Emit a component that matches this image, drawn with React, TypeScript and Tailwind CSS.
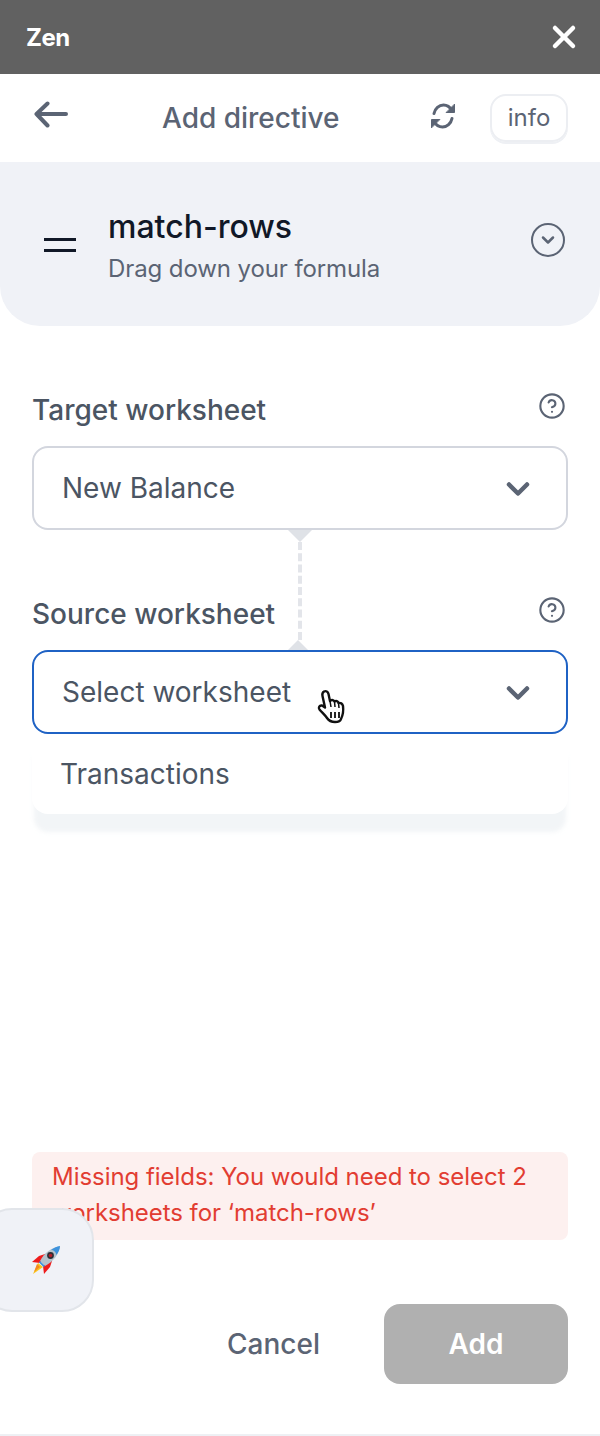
import { ChevronDown, CircleHelp, X } from "lucide-react";

// rocket emoji, drawn because no colour emoji font is installed
const Rocket = () => (
  <svg width="30" height="30" viewBox="0 0 30 30">
    <path d="M8 11 L14 9 L15 13 L9 18 L1 17 Z" fill="#ee1c1c" />
    <path d="M19 22 L21 16 L17 15 L12 21 L13 29 Z" fill="#ee1c1c" />
    <path d="M7 18 L12 22 L2 29 Z" fill="#f9c51d" />
    <path d="M6 19 L9 22 L3 27 Z" fill="#f58a1f" />
    <path d="M9 16 C13 8 20 3 29 1 C28 9 23 16 14 21 Z" fill="#b4c2cc" />
    <path d="M20 5 C23 2.500 26 1.500 29 1 C29 4 27.500 7 25.500 10 C25 7 23 5 20 5 Z" fill="#3d93dd" />
    <path d="M9 16 L14 21 L12.500 22 L8 17.500 Z" fill="#3d93dd" />
    <circle cx="19.500" cy="10.500" r="3.400" fill="#2e3036" />
    <circle cx="19.500" cy="10.500" r="1.800" fill="#b3202a" />
  </svg>
);

// mac style pointing hand cursor
const HandCursor = () => (
  <svg width="32" height="36" viewBox="0 0 32 36">
    <path
      d="M8 3.500 C10 2.500 12 3.500 12.500 6 L14 13 C15 11.500 17.500 11.500 18.500 13.500 C20 12.500 22 13 22.500 15 C24.500 14.500 26.500 15.500 27 18 C27.500 22 27 27 25 31 C24.500 33 22 34 19 34 C15 34 13 33 11 30 C9 27 6 24.500 3.500 21.500 C2 19.500 3.500 17 6 17.500 L9 19.500 L6.500 8 C6 6 6.500 4.500 8 3.500 Z"
      fill="#fff"
      stroke="#111"
      strokeWidth="2.400"
      strokeLinejoin="round"
    />
    <path d="M15 24 V30 M19 24 V30 M23 24 V30" stroke="#111" strokeWidth="1.800" />
    <path d="M14 13 L15 19 M18.500 13.500 L19 19 M22.500 15 L23 20" stroke="#111" strokeWidth="1.500" />
  </svg>
);

const BackArrow = () => (
  <svg width="34" height="28" viewBox="0 0 34 28" fill="none" stroke="#5b6474" strokeWidth="4" strokeLinecap="round" strokeLinejoin="round">
    <path d="M32 13 H2.500 M13.500 2.500 L2.500 13 L13.500 24.500" />
  </svg>
);

const Refresh = () => (
  <svg width="28" height="28" viewBox="0 0 28 28" fill="none" stroke="#5b6474" strokeWidth="3" strokeLinecap="round" strokeLinejoin="round">
    <path d="M5 11.500 C6 6.500 10 3 14.500 3 C18 3 21 5 23 8.500" />
    <path d="M23 16.500 C22 21.500 18 25 13.500 25 C10 25 7 23 5 19.500" />
    <path d="M25.500 2.500 V10.500 H17.500 Z" fill="#5b6474" strokeWidth="1" />
    <path d="M2.500 25.500 V17.500 H10.500 Z" fill="#5b6474" strokeWidth="1" />
  </svg>
);

const Field = ({
  label,
  value,
  active,
}: {
  label: string;
  value: string;
  active?: boolean;
}) => (
  <div className="flex flex-col gap-[18px]">
    <div className="flex h-[36px] items-center justify-between">
      <span className="text-[28px] leading-[36px] font-medium text-[#4b5563]">{label}</span>
      <CircleHelp className="mr-[2px] mb-[8px] h-[28px] w-[28px] text-[#5b6474]" strokeWidth={1.8} />
    </div>
    <div
      className={`flex h-[84px] items-center justify-between rounded-[16px] border-2 bg-white pr-[30px] pl-[28px] ${
        active ? "border-[#1f62c4]" : "border-[#d3d6de]"
      }`}
    >
      <span className="text-[28px] leading-[36px] text-[#4b5563]">{value}</span>
      <ChevronDown className="mt-[1px] h-[36px] w-[36px] text-[#5b6474]" strokeWidth={3} />
    </div>
  </div>
);

export default function App() {
  return (
    <div
      className="relative flex h-[1436px] w-[600px] flex-col overflow-hidden border-b-2 border-[#eef0f4] bg-white"
      style={{ fontFamily: "Inter, 'Noto Sans', sans-serif" }}
    >
      {/* top bar */}
      <div className="flex h-[74px] shrink-0 items-center justify-between bg-[#616161] pr-[18px] pl-[26px]">
        <span className="mt-[2px] text-[24px] font-bold tracking-[-0.5px] text-white">Zen</span>
        <X className="h-[36px] w-[36px] text-white" strokeWidth={3} />
      </div>

      {/* nav */}
      <div className="flex h-[88px] shrink-0 items-center px-[32px]">
        <div className="mb-[6px] ml-[2px]">
          <BackArrow />
        </div>
        <span className="ml-[94px] text-[28px] font-medium text-[#5b6474]">Add directive</span>
        <div className="mb-[4px] ml-[89px]">
          <Refresh />
        </div>
        <div className="ml-auto flex h-[48px] w-[78px] items-center justify-center rounded-[16px] border-2 border-[#eceef2] text-[24px] text-[#5b6474] shadow-[0_2px_0_#eef0f4]">
          info
        </div>
      </div>

      {/* directive card */}
      <div className="flex h-[164px] shrink-0 items-center rounded-b-[40px] bg-[#f0f2f7] pr-[35px] pl-[44px]">
        <div className="mt-[2px] flex w-[64px] flex-col gap-[8px]">
          <div className="h-[3px] w-[32px] bg-[#111827]" />
          <div className="h-[3px] w-[32px] bg-[#111827]" />
        </div>
        <div className="mt-[3px] flex flex-col">
          <span className="text-[32px] leading-[40px] font-medium text-[#111827]">match-rows</span>
          <span className="mt-[6px] text-[24px] leading-[32px] tracking-[-0.1px] text-[#5b6474]">Drag down your formula</span>
        </div>
        <div className="mb-[8px] ml-auto flex h-[34px] w-[34px] items-center justify-center rounded-full border-[2.5px] border-[#5b6474]">
          <ChevronDown className="h-[20px] w-[20px] text-[#5b6474]" strokeWidth={3} />
        </div>
      </div>

      {/* form */}
      <div className="relative mx-[32px] mt-[66px] flex flex-col gap-[66px]">
        <Field label="Target worksheet" value="New Balance" />
        <Field label="Source worksheet" value="Select worksheet" active />

        {/* connector between the two fields */}
        <div className="absolute top-[138px] left-[256px] h-0 w-0 border-x-[12px] border-t-[12px] border-x-transparent border-t-[#dfe2e7]" />
        <div className="absolute top-[150px] left-[266px] h-[98px] border-l-[4px] border-dashed border-[#e3e5ea]" />
        <div className="absolute top-[248px] left-[256px] h-0 w-0 border-x-[10px] border-b-[10px] border-x-transparent border-b-[#dfe2e7]" />

        {/* dropdown menu */}
        <div className="absolute top-[342px] left-0 flex h-[80px] w-[536px] items-center rounded-b-[16px] bg-white pl-[28px] text-[28px] text-[#4b5563] shadow-[0_20px_4px_-2px_rgba(232,236,241,0.55)]">
          Transactions
        </div>
        <div className="absolute top-[296px] left-[284px]">
          <HandCursor />
        </div>
      </div>

      <div className="flex-1" />

      {/* error */}
      <div className="mx-[32px] h-[88px] shrink-0 rounded-[8px] bg-[#fdf0ef] px-[20px] py-[7px] text-[24px] leading-[36px] tracking-[-0.04px] text-[#e23d32]">
        Missing fields: You would need to select 2 worksheets for ‘match-rows’
      </div>

      {/* actions */}
      <div className="mt-[64px] mb-[50px] flex shrink-0 items-center justify-end gap-[64px] pr-[32px]">
        <span className="text-[28px] font-medium text-[#5b6474]">Cancel</span>
        <div className="flex h-[80px] w-[184px] items-center justify-center rounded-[16px] bg-[#b0b0b0] text-[28px] font-semibold text-white">
          Add
        </div>
      </div>

      {/* floating rocket tab */}
      <div className="absolute top-[1208px] -left-[20px] flex h-[104px] w-[114px] items-center justify-center rounded-[32px] border-2 border-[#e2e5ea] bg-[#f0f2f7] pl-[18px]">
        <Rocket />
      </div>
    </div>
  );
}
